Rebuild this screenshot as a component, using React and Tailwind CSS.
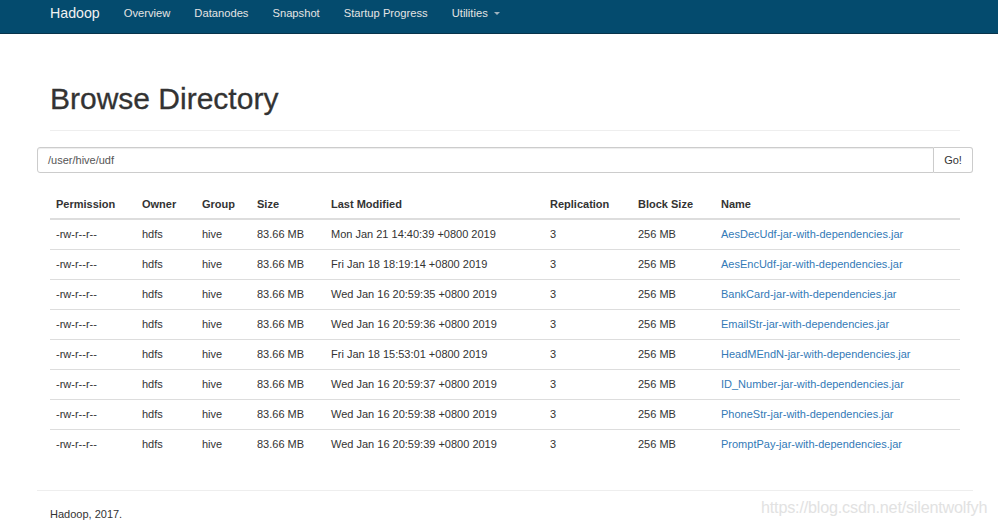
const rows = [
  { date: 'Mon Jan 21 14:40:39 +0800 2019', name: 'AesDecUdf-jar-with-dependencies.jar' },
  { date: 'Fri Jan 18 18:19:14 +0800 2019', name: 'AesEncUdf-jar-with-dependencies.jar' },
  { date: 'Wed Jan 16 20:59:35 +0800 2019', name: 'BankCard-jar-with-dependencies.jar' },
  { date: 'Wed Jan 16 20:59:36 +0800 2019', name: 'EmailStr-jar-with-dependencies.jar' },
  { date: 'Fri Jan 18 15:53:01 +0800 2019', name: 'HeadMEndN-jar-with-dependencies.jar' },
  { date: 'Wed Jan 16 20:59:37 +0800 2019', name: 'ID_Number-jar-with-dependencies.jar' },
  { date: 'Wed Jan 16 20:59:38 +0800 2019', name: 'PhoneStr-jar-with-dependencies.jar' },
  { date: 'Wed Jan 16 20:59:39 +0800 2019', name: 'PromptPay-jar-with-dependencies.jar' },
];

const headers = [
  ['Permission', 'w-[86px]'],
  ['Owner', 'w-[60px]'],
  ['Group', 'w-[55px]'],
  ['Size', 'w-[74px]'],
  ['Last Modified', 'w-[219px]'],
  ['Replication', 'w-[88px]'],
  ['Block Size', 'w-[83px]'],
  ['Name', ''],
];

const navItems = ['Overview', 'Datanodes', 'Snapshot', 'Startup Progress'];

const App = () => {
  return (
    <div className="relative min-h-[524px] bg-white text-[#333] font-['Liberation_Sans',Arial,sans-serif]">
      {/* navbar */}
      <div className="h-[34px] bg-[#044b6e] border-b border-[#08344b] pl-[50px]">
        <div className="h-[27px] flex items-center">
          <span className="text-[14.2px] text-[#f2f2f2] pr-[12px]">Hadoop</span>
          {navItems.map((item) => (
            <span key={item} className="text-[11.2px] text-[#e4e4e4] px-[12px]">{item}</span>
          ))}
          <span className="text-[11.2px] text-[#e4e4e4] pl-[12px] flex items-center gap-[6px]">
            Utilities
            <span className="w-0 h-0 border-l-[3px] border-r-[3px] border-t-[3px] border-l-transparent border-r-transparent border-t-[#9fb3bf]" />
          </span>
        </div>
      </div>

      <div className="ml-[37px] w-[936px]">
        <div className="mx-[13px] mt-[49px]">
          <h1 className="text-[30px] leading-[32px] text-[#333] [-webkit-text-stroke:0.3px_#333]">Browse Directory</h1>
          <div className="mt-[15px] border-t border-[#eee]" />
        </div>

        <div className="mt-[16px] flex h-[26px]">
          <div className="flex-1 border border-[#ccc] rounded-l-[3px] flex items-center pl-[10px] text-[11px] text-[#555] shadow-[inset_0_1px_1px_rgba(0,0,0,0.075)]">
            /user/hive/udf
          </div>
          <div className="w-[39px] border border-l-0 border-[#ccc] rounded-r-[3px] flex items-center justify-center text-[11px] text-[#333] bg-white">
            Go!
          </div>
        </div>

        <div className="mx-[13px] mt-[16px]">
          <table className="w-full table-fixed text-[11px]">
            <thead>
              <tr className="h-[30px] border-b-2 border-[#ddd]">
                {headers.map(([h, w]) => (
                  <th key={h} className={`${w} text-left font-bold px-[6px] pt-[2px]`}>{h}</th>
                ))}
              </tr>
            </thead>
            <tbody>
              {rows.map((r, i) => (
                <tr key={r.name} className={`h-[30px] ${i > 0 ? 'border-t border-[#ddd]' : ''}`}>
                  <td className="px-[6px]">-rw-r--r--</td>
                  <td className="px-[6px]">hdfs</td>
                  <td className="px-[6px]">hive</td>
                  <td className="px-[6px]">83.66 MB</td>
                  <td className="px-[6px]">{r.date}</td>
                  <td className="px-[6px]">3</td>
                  <td className="px-[6px]">256 MB</td>
                  <td className="px-[6px] text-[#337ab7]">{r.name}</td>
                </tr>
              ))}
            </tbody>
          </table>
        </div>

        <div className="mt-[31px] border-t border-[#eee]" />
        <div className="mx-[13px] mt-[15px] text-[11px]">Hadoop, 2017.</div>
      </div>

      {/* watermark */}
      <div className="absolute left-[761px] top-[495px] text-[16.2px] text-[#e2e2e2] tracking-[-0.2px]">
        https://blog.csdn.net/silentwolfyh
      </div>
    </div>
  );
};

export default App;
